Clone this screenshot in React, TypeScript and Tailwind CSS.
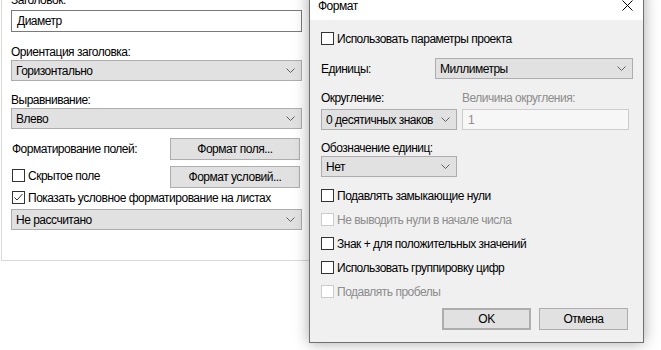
import React from 'react';

function Chevron({ color = '#606060' }: { color?: string }) {
  return (
    <svg width="9" height="5" viewBox="0 0 9 5" className="shrink-0">
      <path d="M0.5 0.5 L4.5 4.5 L8.5 0.5" fill="none" stroke={color} strokeWidth="1" />
    </svg>
  );
}

function Select({ value, className = '' }: { value: string; className?: string }) {
  return (
    <div className={`flex h-[21px] items-center justify-between border border-[#adadad] bg-[#e1e1e1] pl-[4px] pr-[6px] ${className}`}>
      <span className="whitespace-nowrap leading-none text-black">{value}</span>
      <Chevron />
    </div>
  );
}

function Button({ label, className = '' }: { label: string; className?: string }) {
  return (
    <div className={`flex items-center justify-center whitespace-nowrap border border-[#adadad] bg-[#e1e1e1] text-black ${className}`}>
      {label}
    </div>
  );
}

function Check({ label, checked = false, disabled = false }: { label: string; checked?: boolean; disabled?: boolean }) {
  return (
    <div className="flex h-[13px] items-center gap-[3px]">
      <div
        className={`relative h-[13px] w-[13px] shrink-0 border bg-white ${disabled ? 'border-[#cccccc]' : 'border-[#333333]'}`}
      >
        {checked && (
          <svg width="11" height="11" viewBox="0 0 11 11" className="absolute left-0 top-0">
            <path d="M1.5 5.5 L4 8 L9.5 2" fill="none" stroke="#333333" strokeWidth="1" />
          </svg>
        )}
      </div>
      <span className={`whitespace-nowrap ${disabled ? 'text-[#8d8d8d]' : 'text-black'}`}>{label}</span>
    </div>
  );
}

export default function App() {
  return (
    <div
      className="relative h-[350px] w-[661px] overflow-hidden bg-white text-[12px] tracking-[-0.5px] text-black"
      style={{ fontFamily: '"Liberation Sans", Arial, sans-serif' }}
    >
      {/* Field properties panel */}
      <div className="ml-[1px] flex h-[261px] w-[330px] flex-col border-b border-l border-[#d9d9d9] pl-[9px] pr-[30px]">
        <div className="mt-[-8px] h-[16px] leading-[16px]">Заголовок:</div>
        <div className="mt-[2px] flex h-[22px] w-[291px] items-center border border-[#7a7a7a] bg-white pl-[5px]">
          Диаметр
        </div>
        <div className="mt-[12px] h-[16px] leading-[16px]">Ориентация заголовка:</div>
        <Select value="Горизонтально" className="w-[291px]" />
        <div className="mt-[11px] h-[16px] leading-[16px]">Выравнивание:</div>
        <Select value="Влево" className="w-[291px]" />
        <div className="mt-[9px] flex w-[291px] items-center justify-between">
          <span className="pl-[1px]">Форматирование полей:</span>
          <Button label="Формат поля..." className="mr-[2px] h-[22px] w-[130px]" />
        </div>
        <div className="mt-[6px] flex w-[291px] items-start justify-between">
          <div className="mt-[3px] pl-[1px]">
            <Check label="Скрытое поле" />
          </div>
          <Button label="Формат условий..." className="mr-[2px] h-[22px] w-[130px]" />
        </div>
        <div className="mt-[3px] pl-[1px]">
          <Check label="Показать условное форматирование на листах" checked />
        </div>
        <Select value="Не рассчитано" className="mt-[5px] w-[291px]" />
      </div>

      {/* Format dialog window */}
      <div className="absolute left-[309px] top-[-11px] flex h-[354px] w-[335px] flex-col border border-[#707070] bg-[#f0f0f0] shadow-[0_0_14px_rgba(0,0,0,0.35)]">
        <div className="flex h-[30px] shrink-0 items-end justify-between bg-white pl-[8px] pr-[10px]">
          <span className="mb-[6px] leading-[16px]">Формат</span>
          <svg width="11" height="11" viewBox="0 0 11 11" className="mb-[9px]">
            <path d="M0.5 0.5 L10.5 10.5 M10.5 0.5 L0.5 10.5" stroke="#000" strokeWidth="1" />
          </svg>
        </div>
        <div className="flex flex-col px-[11px]">
          <div className="mt-[12px]">
            <Check label="Использовать параметры проекта" />
          </div>
          <div className="mt-[13px] flex items-center justify-between">
            <span>Единицы:</span>
            <Select value="Миллиметры" className="mr-[-1px] w-[198px]" />
          </div>
          <div className="mt-[11px] flex h-[16px] items-center leading-[16px]">
            <span className="w-[141px]">Округление:</span>
            <span className="text-[#8d8d8d]">Величина округления:</span>
          </div>
          <div className="mt-[3px] flex items-center">
            <Select value="0 десятичных знаков" className="w-[136px]" />
            <div className="ml-[5px] flex h-[21px] w-[167px] items-center border border-[#cccccc] bg-[#f7f7f7] pl-[5px] text-[#8d8d8d]">
              1
            </div>
          </div>
          <div className="mt-[10px] h-[16px] leading-[16px]">Обозначение единиц:</div>
          <Select value="Нет" className="mt-[0px] w-[136px]" />
          <div className="mt-[12px] flex flex-col gap-[11px]">
            <Check label="Подавлять замыкающие нули" />
            <Check label="Не выводить нули в начале числа" disabled />
            <Check label="Знак + для положительных значений" />
            <Check label="Использовать группировку цифр" />
            <Check label="Подавлять пробелы" disabled />
          </div>
          <div className="mt-[10px] flex justify-end gap-[8px] pr-[4px]">
            <Button label="OK" className="h-[22px] w-[89px] border-2 border-[#0078d7]" />
            <Button label="Отмена" className="h-[22px] w-[89px]" />
          </div>
        </div>
      </div>
    </div>
  );
}
